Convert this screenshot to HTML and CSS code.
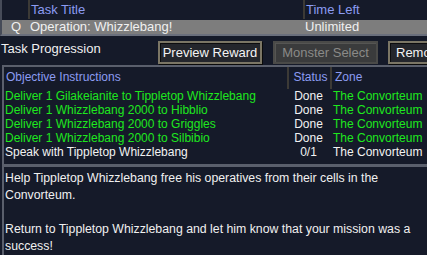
FILE: index.html
```html
<!DOCTYPE html>
<html lang="en">
<head>
    <meta charset="UTF-8">
    <title>Task Journal</title>
    <link rel="stylesheet" href="styles.css">
</head>
<body>
    <!-- task list -->
    <div class="tasks">
        <div class="task-row task-head">
            <span class="c-q"></span>
            <span class="c-title">Task Title</span>
            <span class="c-time">Time Left</span>
        </div>
        <div class="task-row task-sel">
            <span class="c-q">Q</span>
            <span class="c-title">Operation: Whizzlebang!</span>
            <span class="c-time">Unlimited</span>
        </div>
    </div>

    <!-- progression bar -->
    <div class="bar">
        <span class="bar-label">Task Progression</span>
        <button class="btn">Preview Reward</button>
        <button class="btn btn-off">Monster Select</button>
        <button class="btn btn-remove">Remove Task</button>
    </div>

    <!-- objectives -->
    <div class="objectives">
        <div class="obj-row obj-head">
            <span class="o-text">Objective Instructions</span>
            <span class="o-status">Status</span>
            <span class="o-zone">Zone</span>
        </div>
        <div class="obj-row done">
            <span class="o-text">Deliver 1 Gilakeianite to Tippletop Whizzlebang</span>
            <span class="o-status">Done</span>
            <span class="o-zone">The Convorteum</span>
        </div>
        <div class="obj-row done">
            <span class="o-text">Deliver 1 Whizzlebang 2000 to Hibblio</span>
            <span class="o-status">Done</span>
            <span class="o-zone">The Convorteum</span>
        </div>
        <div class="obj-row done">
            <span class="o-text">Deliver 1 Whizzlebang 2000 to Griggles</span>
            <span class="o-status">Done</span>
            <span class="o-zone">The Convorteum</span>
        </div>
        <div class="obj-row done">
            <span class="o-text">Deliver 1 Whizzlebang 2000 to Silbibio</span>
            <span class="o-status">Done</span>
            <span class="o-zone">The Convorteum</span>
        </div>
        <div class="obj-row">
            <span class="o-text">Speak with Tippletop Whizzlebang</span>
            <span class="o-status">0/1</span>
            <span class="o-zone">The Convorteum</span>
        </div>
    </div>

    <!-- description -->
    <div class="desc">
        <p>Help Tippletop Whizzlebang free his operatives from their cells in the Convorteum.</p>
        <p>Return to Tippletop Whizzlebang and let him know that your mission was a success!</p>
    </div>
</body>
</html>
```

FILE: styles.css
```css
*{
    margin: 0;
    padding: 0;
    box-sizing: border-box;
}

body{
    width: 427px;
    height: 255px;
    overflow: hidden;
    background-color: #151a29;
    color: #f0f0f0;
    font-family: "Liberation Sans", Arial, sans-serif;
    font-size: 13px;
}

/* task list */
.tasks{
    border-left: 2px solid #464b58;
    border-bottom: 2px solid #6a6f7c;
}

.task-row{
    display: grid;
    grid-template-columns: 26px 275px 1fr;
}

.task-head{
    color: #8c9cf2;
    height: 19px;
    line-height: 19px;
}

.task-head .c-title,
.task-head .c-time{
    border-left: 2px solid #3c3a36;
    padding-left: 1px;
}

.task-sel{
    background-color: #7d7d7d;
    height: 14px;
    line-height: 14px;
    margin-top: 1px;
}

.task-sel .c-q{
    padding-left: 9px;
}

.task-sel .c-title,
.task-sel .c-time{
    padding-left: 2px;
}

/* progression bar */
.bar{
    display: flex;
    align-items: flex-start;
    height: 29px;
    padding-left: 1px;
    padding-top: 5px;
    white-space: nowrap;
    overflow: hidden;
}

.bar-label{
    width: 157px;
    flex-shrink: 0;
    line-height: 15px;
}

.btn{
    flex-shrink: 0;
    height: 23px;
    width: 104px;
    margin-right: 11px;
    padding: 0;
    font-family: inherit;
    font-size: 13px;
    color: #f4f4f4;
    white-space: nowrap;
    background-color: #24262c;
    border: 2px solid #7b7665;
    box-shadow: inset 1px 1px 0 #0c0c0e, 1px 1px 0 #0a0a0a;
}

.btn-off{
    width: 105px;
    margin-right: 10px;
    color: #8a8a88;
    background-color: #3a3b3c;
    border-color: #4a4a48;
    box-shadow: inset 1px 1px 0 #555553;
}

.btn-remove{
    text-align: left;
    padding-left: 6px;
}

/* objectives */
.objectives{
    height: 99px;
    margin-left: 2px;
    border: 2px solid #5a5f6c;
    border-right: none;
    border-bottom: none;
    font-size: 12px;
}

.obj-row{
    display: grid;
    grid-template-columns: 283px 43px 1fr;
    height: 14px;
    line-height: 14px;
    color: #f2f2f2;
}

.obj-head{
    color: #8c9cf2;
    height: 22px;
    line-height: 20px;
}

.obj-head .o-status,
.obj-head .o-zone{
    border-left: 2px solid #3c3a36;
    padding-left: 2px;
}

.o-text{
    padding-left: 1px;
    white-space: nowrap;
    overflow: hidden;
}

.obj-head .o-text{
    padding-left: 2px;
}

.o-status{
    text-align: center;
}

.obj-row .o-zone{
    padding-left: 3px;
    white-space: nowrap;
}

.done .o-text,
.done .o-zone{
    color: #1ee81e;
}

/* description */
.desc{
    margin-left: 2px;
    border-top: 3px solid #5a5f6c;
    border-left: 2px solid #5a5f6c;
    padding: 3px 4px 0 1px;
    font-size: 12.3px;
    line-height: 17px;
    height: 100px;
}

.desc p{
    margin-bottom: 17px;
}
```
